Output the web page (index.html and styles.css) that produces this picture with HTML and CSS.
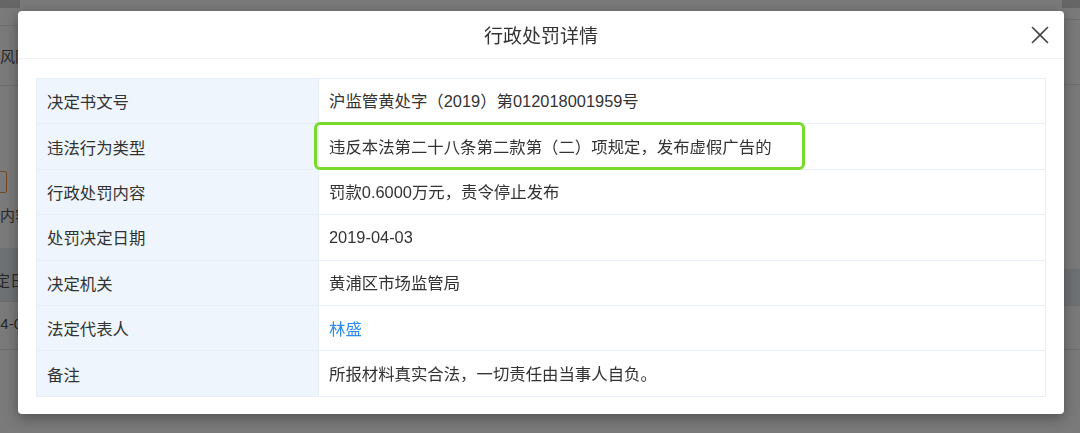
FILE: index.html
```html
<!DOCTYPE html>
<html lang="zh-CN">
<head>
<meta charset="utf-8">
<title>行政处罚详情</title>
<link rel="stylesheet" href="styles.css">
</head>
<body>
<div class="page">
  <div class="side side-left">
    <div class="bar"></div>
    <div class="blk b1"></div>
    <div class="blk b2"><span class="txt">风险</span></div>
    <div class="blk b3"><span class="obox"></span></div>
    <div class="blk b4"><span class="txt">内容</span></div>
    <div class="blk b5"><span class="txt cut1">决定日期</span></div>
    <div class="blk b6"><span class="txt num cut2">04-03</span></div>
    <div class="blk b7"></div>
  </div>
  <div class="side side-right">
    <div class="bar"></div>
    <div class="blk r1"></div>
    <div class="blk r2"></div>
    <div class="blk r3"></div>
    <div class="blk r4"></div>
    <div class="blk r5"></div>
  </div>
</div>

<div class="mask"></div>

<div class="modal">
  <div class="modal-header">
    <span class="modal-title">行政处罚详情</span>
    <span class="close" aria-label="关闭">
      <svg width="18" height="18" viewBox="0 0 18 18"><path d="M1.5 1.5 L16.5 16.5 M16.5 1.5 L1.5 16.5" stroke="#444" stroke-width="1.6" fill="none" stroke-linecap="round"/></svg>
    </span>
  </div>
  <div class="modal-body">
    <table class="detail">
      <tr><td class="label">决定书文号</td><td class="value">沪监管黄处字（2019）第012018001959号</td></tr>
      <tr><td class="label">违法行为类型</td><td class="value"><span class="highlight"></span>违反本法第二十八条第二款第（二）项规定，发布虚假广告的</td></tr>
      <tr><td class="label">行政处罚内容</td><td class="value">罚款0.6000万元，责令停止发布</td></tr>
      <tr><td class="label">处罚决定日期</td><td class="value">2019-04-03</td></tr>
      <tr><td class="label">决定机关</td><td class="value">黄浦区市场监管局</td></tr>
      <tr><td class="label">法定代表人</td><td class="value"><a class="link" href="#">林盛</a></td></tr>
      <tr><td class="label">备注</td><td class="value">所报材料真实合法，一切责任由当事人自负。</td></tr>
    </table>
  </div>
</div>
</body>
</html>
```

FILE: styles.css
```css
html, body {
  margin: 0;
  padding: 0;
  width: 1080px;
  height: 433px;
  overflow: hidden;
  background: #fff;
  font-family: "Liberation Sans", "Noto Sans CJK SC", sans-serif;
}

.page {
  display: flex;
  justify-content: space-between;
  height: 433px;
}

.side {
  display: flex;
  flex-direction: column;
  overflow: hidden;
  white-space: nowrap;
}
.side-left { width: 20px; }
.side-right { width: 18px; }

.bar { height: 8px; background: #d6d6d6; flex: none; }

.blk { flex: none; box-sizing: border-box; display: flex; align-items: center; }
.txt { font-size: 15px; color: #555; font-family: "Noto Sans CJK SC", sans-serif; }
.num { font-family: "Liberation Sans", sans-serif; }
.cut1 { margin-left: -20px; }
.cut2 { margin-left: -8px; }

.b1 { height: 18px; border-bottom: 1px solid #e6e6e6; }
.b2 { height: 60px; border-bottom: 1px solid #e6e6e6; }
.b3 { height: 107px; align-items: flex-end; }
.obox { display: block; width: 24px; height: 22px; margin-left: -17px; border: 1px solid #f29a4a; border-radius: 2px; box-sizing: border-box; }
.b4 { height: 55px; padding-bottom: 12px; }
.b5 { height: 54px; background: #e6ecf2; border-bottom: 1px solid #e0e0e0; padding-top: 10px; }
.b6 { height: 48px; border-bottom: 1px solid #e6e6e6; padding-bottom: 4px; }
.b7 { height: 80px; }

.r1 { height: 12px; border-bottom: 1px solid #e6e6e6; }
.r2 { height: 65px; border-bottom: 1px solid #e6e6e6; }
.r3 { height: 185px; border-bottom: 1px solid #e6e6e6; }
.r4 { height: 35px; background: #e6ecf2; }
.r5 { height: 45px; border-top: 1px solid #e6e6e6; border-bottom: 1px solid #e6e6e6; }

.mask {
  position: fixed;
  inset: 0;
  background: rgba(0, 0, 0, 0.52);
}

.modal {
  position: absolute;
  left: 18px;
  top: 11px;
  width: 1046px;
  height: 403px;
  background: #fff;
  border-radius: 4px;
  box-shadow: 0 4px 14px rgba(0, 0, 0, 0.35);
  display: flex;
  flex-direction: column;
}

.modal-header {
  height: 47px;
  flex: none;
  border-bottom: 1px solid #eef1f5;
  display: flex;
  align-items: center;
  justify-content: center;
  position: relative;
}

.modal-title {
  font-family: "Noto Sans CJK SC", sans-serif;
  font-size: 19px;
  color: #333;
  margin-top: -1px;
}

.close {
  position: absolute;
  right: 15px;
  top: 15px;
  width: 18px;
  height: 18px;
  display: block;
}
.close svg { display: block; }

.modal-body {
  padding: 19px 19px 18px 18px;
}

.detail {
  width: 1010px;
  border-collapse: collapse;
  table-layout: fixed;
  font-size: 16.4px;
  color: #333;
}

.detail td {
  height: 45.4px;
  border: 1px solid #e7eef6;
  padding: 0 10px;
  box-sizing: border-box;
  vertical-align: middle;
  line-height: 20px;
  font-family: "Liberation Sans", "Noto Sans CJK SC", sans-serif;
}

.detail td.label {
  width: 282px;
  background: #eef5fc;
  font-family: "Noto Sans CJK SC", sans-serif;
}

.detail td.value {
  position: relative;
  background: #fff;
}

.link {
  color: #2d8cf0;
  text-decoration: none;
  font-family: "Noto Sans CJK SC", sans-serif;
}

.highlight {
  position: absolute;
  left: -5px;
  top: -2px;
  width: 491px;
  height: 48px;
  box-sizing: border-box;
  border: 3px solid #78da2c;
  border-radius: 6px;
}
```
